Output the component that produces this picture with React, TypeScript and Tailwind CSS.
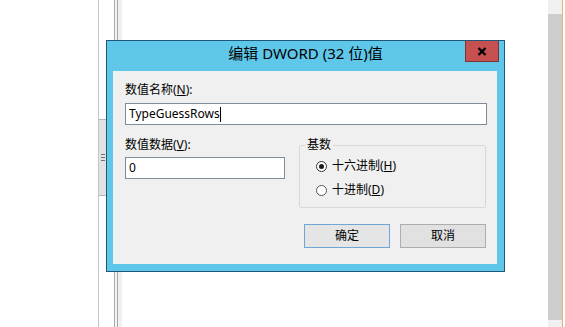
const font = { fontFamily: '"Noto Sans", "Noto Sans CJK SC", sans-serif' }

function Radio({ checked, children }: { checked?: boolean; children: React.ReactNode }) {
  return (
    <div className="flex items-center h-4 pl-[16px]">
      <div
        className={`w-[11px] h-[11px] rounded-full bg-white border flex items-center justify-center ${
          checked ? 'border-[#333]' : 'border-[#555]'
        }`}
      >
        {checked && <div className="w-[5px] h-[5px] rounded-full bg-[#1a1a1a]" />}
      </div>
      <span className="ml-[5px] text-[12px] leading-4 text-black">{children}</span>
    </div>
  )
}

export default function App() {
  return (
    <div className="relative w-[565px] h-[327px] bg-white flex overflow-hidden" style={font}>
      {/* window behind the dialog */}
      <div className="w-[98px]" />
      <div className="w-px bg-[#c4c4c4]" />
      <div className="w-[15px] flex flex-col">
        <div className="h-[119px]" />
        <div className="w-[7px] h-[77px] bg-[#e2e2e2] border-y border-[#b4b4b4] flex flex-col items-center justify-center gap-[2px]">
          <div className="w-[4px] h-px bg-[#707070]" />
          <div className="w-[4px] h-px bg-[#707070]" />
          <div className="w-[4px] h-px bg-[#707070]" />
        </div>
      </div>
      <div className="w-px bg-[#a8a8a8]" />
      <div className="w-[2px] bg-[#f4f4f4]" />
      <div className="w-px bg-[#a8a8a8]" />
      <div className="w-[4px] bg-[#f0f0f0]" />
      <div className="flex-1" />
      <div className="w-[14px] flex flex-col">
        <div className="h-[14px] bg-[#f0f0f0]" />
        <div className="flex-1 bg-[#cdcdcd]" />
        <div className="h-[7px] bg-[#f0f0f0]" />
      </div>
      <div className="w-px bg-[#e3b46a]" />
      <div className="w-[2px]" />

      {/* dialog */}
      <div className="absolute left-[106px] top-[40px] w-[399px] h-[232px] border border-[#1d5877] bg-[#5fc8ea] flex flex-col">
        <div className="relative h-[30px] flex items-start justify-center">
          <span className="mt-[2px] text-[15px] leading-[20px] text-black">编辑 DWORD (32 位)值</span>
          <div className="absolute right-[5px] top-0 w-[34px] h-[21px] bg-[#c75050] border border-t-0 border-[#7d3434] flex items-center justify-center">
            <svg width="10" height="9" viewBox="0 0 10 9">
              <path d="M1.5 1 L8.5 8 M8.5 1 L1.5 8" stroke="#000" strokeWidth="2.4" />
            </svg>
          </div>
        </div>

        <div className="ml-[6px] mr-[7px] mb-[7px] flex-1 bg-[#f0f0f0] pt-[11px] pl-[12px] pr-[10px] flex flex-col">
          <div className="text-[12px] leading-4 text-black">
            数值名称(<span className="underline">N</span>):
          </div>
          <div className="mt-[5px] h-[22px] w-[362px] bg-white border border-[#7f8c99] flex items-center px-[3px]">
            <span className="text-[12px] leading-4 text-black">TypeGuessRows</span>
            <div className="w-px h-[15px] bg-black" />
          </div>

          <div className="mt-[12px] flex">
            <div className="w-[160px] flex flex-col">
              <div className="text-[12px] leading-4 text-black">
                数值数据(<span className="underline">V</span>):
              </div>
              <div className="mt-[4px] h-[22px] bg-white border border-[#7f8c99] flex items-center px-[3px]">
                <span className="text-[12px] leading-4 text-black">0</span>
              </div>
            </div>

            <fieldset className="ml-[14px] w-[187px] h-[71px] border border-[#d8d8d8] rounded-[2px]">
              <legend className="ml-[5px] px-[2px] text-[12px] leading-4 text-black">基数</legend>
              <div className="mt-[5px] flex flex-col gap-[8px]">
                <Radio checked>
                  十六进制(<span className="underline">H</span>)
                </Radio>
                <Radio>
                  十进制(<span className="underline">D</span>)
                </Radio>
              </div>
            </fieldset>
          </div>

          <div className="mt-[16px] flex justify-end gap-[10px] pr-px">
            <button className="w-[86px] h-[24px] bg-[#e5e5e5] border border-[#6fa6d8] text-[12px] leading-4 text-black">
              确定
            </button>
            <button className="w-[86px] h-[24px] bg-[#e1e1e1] border border-[#adadad] text-[12px] leading-4 text-black">
              取消
            </button>
          </div>
        </div>
      </div>
    </div>
  )
}
